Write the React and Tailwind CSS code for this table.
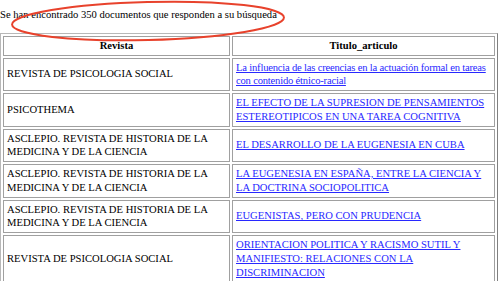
const rows = [
  { revista: "REVISTA DE PSICOLOGIA SOCIAL", titulo: "La influencia de las creencias en la actuación formal en tareas con contenido étnico-racial", tight: true },
  { revista: "PSICOTHEMA", titulo: "EL EFECTO DE LA SUPRESION DE PENSAMIENTOS ESTEREOTIPICOS EN UNA TAREA COGNITIVA" },
  { revista: "ASCLEPIO. REVISTA DE HISTORIA DE LA MEDICINA Y DE LA CIENCIA", titulo: "EL DESARROLLO DE LA EUGENESIA EN CUBA" },
  { revista: "ASCLEPIO. REVISTA DE HISTORIA DE LA MEDICINA Y DE LA CIENCIA", titulo: "LA EUGENESIA EN ESPAÑA, ENTRE LA CIENCIA Y LA DOCTRINA SOCIOPOLITICA" },
  { revista: "ASCLEPIO. REVISTA DE HISTORIA DE LA MEDICINA Y DE LA CIENCIA", titulo: "EUGENISTAS, PERO CON PRUDENCIA" },
  { revista: "REVISTA DE PSICOLOGIA SOCIAL", titulo: "ORIENTACION POLITICA Y RACISMO SUTIL Y MANIFIESTO: RELACIONES CON LA DISCRIMINACION" },
];

// red marker circled around the result count
function Marker() {
  return (
    <svg className="absolute left-0 top-0 pointer-events-none" width="300" height="46" viewBox="0 0 300 46">
      <ellipse cx="148" cy="21" rx="136" ry="19" fill="none" stroke="#e8422c" strokeWidth="2" transform="rotate(-1.5 148 21)" />
    </svg>
  );
}

export default function App() {
  return (
    <div className="relative w-[500px] h-[281px] overflow-hidden bg-white text-black text-[10.6px] leading-[13.75px] font-[Liberation_Serif,Times_New_Roman,serif]">
      <div className="pt-[8px]">Se han encontrado 350 documentos que responden a su búsqueda</div>
      <table className="mt-[11px] w-[498px] border-separate border-spacing-[2px] border border-t-[#b8b8b8] border-l-[#b8b8b8] border-r-[#808080] border-b-[#808080]">
        <thead>
          <tr>
            <th className="w-[227px] px-[3px] py-[2px] font-bold text-center border border-[#a0a0a0]">Revista</th>
            <th className="px-[3px] py-[2px] font-bold text-center border border-[#a0a0a0]">Titulo_articulo</th>
          </tr>
        </thead>
        <tbody>
          {rows.map((r, i) => (
            <tr key={i}>
              <td className="w-[227px] pl-[3px] pr-[14px] py-[2px] align-middle border border-[#a0a0a0]">{r.revista}</td>
              <td className="px-[3px] py-[2px] align-middle border border-[#a0a0a0]">
                <a href="#" className={r.tight ? "text-[#2828ff] underline tracking-[-0.2px]" : "text-[#2828ff] underline"}>{r.titulo}</a>
              </td>
            </tr>
          ))}
        </tbody>
      </table>
      <Marker />
    </div>
  );
}
